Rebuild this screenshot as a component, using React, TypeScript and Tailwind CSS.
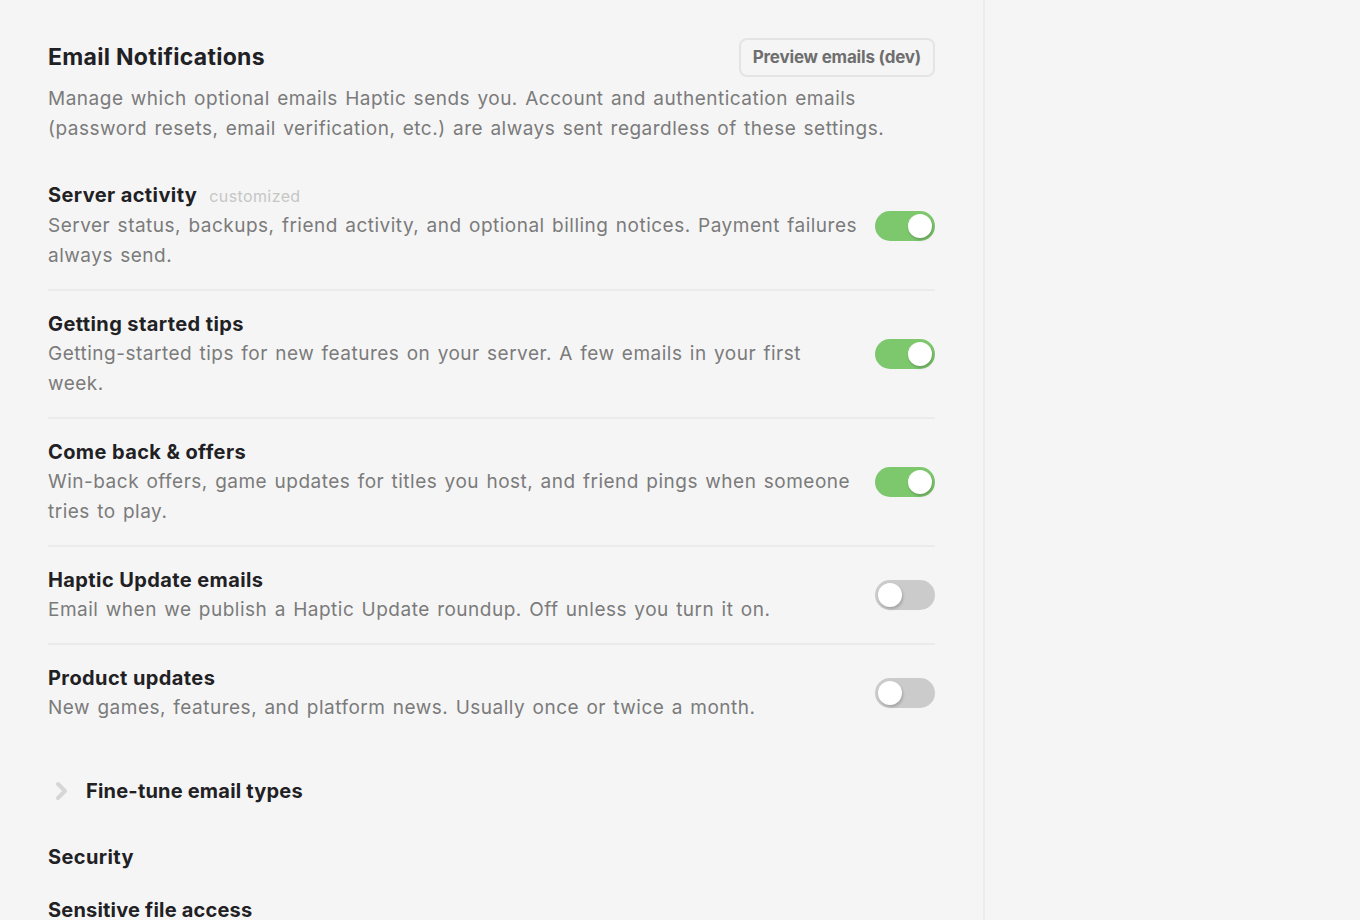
import React, { useState } from 'react';

type Pref = {
  id: string;
  title: string;
  desc: string;
  on: boolean;
  customized?: boolean;
};

const initialPrefs: Pref[] = [
  {
    id: 'server',
    title: 'Server activity',
    desc: 'Server status, backups, friend activity, and optional billing notices. Payment failures always send.',
    on: true,
    customized: true,
  },
  {
    id: 'tips',
    title: 'Getting started tips',
    desc: 'Getting-started tips for new features on your server. A few emails in your first week.',
    on: true,
  },
  {
    id: 'winback',
    title: 'Come back & offers',
    desc: 'Win-back offers, game updates for titles you host, and friend pings when someone tries to play.',
    on: true,
  },
  {
    id: 'haptic',
    title: 'Haptic Update emails',
    desc: 'Email when we publish a Haptic Update roundup. Off unless you turn it on.',
    on: false,
  },
  {
    id: 'product',
    title: 'Product updates',
    desc: 'New games, features, and platform news. Usually once or twice a month.',
    on: false,
  },
];

const Toggle = ({ on, onChange }: { on: boolean; onChange: () => void }) => (
  <button
    onClick={onChange}
    className={`relative w-[60px] h-[30px] rounded-full shrink-0 transition-colors ${on ? 'bg-[#7dc86d]' : 'bg-[#cbcbcb]'}`}
  >
    <span
      className={`absolute top-[3px] w-[24px] h-[24px] rounded-full bg-white shadow-[1px_2px_3px_rgba(0,0,0,0.2)] transition-all ${on ? 'left-[33px]' : 'left-[3px]'}`}
    />
  </button>
);

export default function App() {
  const [prefs, setPrefs] = useState(initialPrefs);

  const toggle = (id: string) => {
    setPrefs(prefs.map(p => (p.id === id ? { ...p, on: !p.on } : p)));
  };

  return (
    <div className="min-h-screen w-full bg-[#f5f5f5] flex font-['Inter',sans-serif]">
      <div className="w-[985px] h-[920px] overflow-hidden border-r-2 border-[#ebebeb] pl-[48px] pr-[48px] pt-[38px]">
        {/* header */}
        <div className="flex items-center justify-between">
          <h2 className="text-[23px] font-bold text-[#1f2124] tracking-[0.3px]">Email Notifications</h2>
          <button className="h-[39px] px-[12px] border-2 border-[#e4e4e4] rounded-lg text-[17px] font-bold text-[#6e6e6e] tracking-[-0.2px]">
            Preview emails (dev)
          </button>
        </div>
        <p className="mt-[7px] text-[19px] leading-[30px] text-[#7b7b7b] tracking-[0.5px] [word-spacing:1.5px]">
          Manage which optional emails Haptic sends you. Account and authentication emails (password resets, email verification, etc.) are always sent regardless of these settings.
        </p>

        {/* preference rows */}
        <div className="mt-[36px]">
          {prefs.map((p, i) => (
            <div
              key={p.id}
              className={`flex items-center gap-[16px] ${i === 0 ? 'pb-[18px]' : 'py-[18px]'} ${i < prefs.length - 1 ? 'border-b-2 border-[#ebebeb]' : ''}`}
            >
              <div className="flex-1">
                <div className="flex items-baseline gap-[12px] leading-[30px]">
                  <span className="text-[20px] font-bold text-[#1f2124] tracking-[0.4px]">{p.title}</span>
                  {p.customized && <span className="text-[16px] text-[#c6c6c6] tracking-[0.4px]">customized</span>}
                </div>
                <p className="text-[19px] leading-[30px] text-[#7b7b7b] tracking-[0.5px] [word-spacing:1.5px]">{p.desc}</p>
              </div>
              <Toggle on={p.on} onChange={() => toggle(p.id)} />
            </div>
          ))}
        </div>

        {/* fine-tune disclosure */}
        <button className="mt-[35px] flex items-center gap-[16px] pl-[6px]">
          <svg width="16" height="20" viewBox="0 0 16 20" fill="none">
            <path d="M4 3l7 7-7 7" stroke="#d6d6d6" strokeWidth="4" strokeLinecap="round" strokeLinejoin="round" />
          </svg>
          <span className="text-[20px] font-bold text-[#1f2124] tracking-[0.2px]">Fine-tune email types</span>
        </button>

        <h3 className="mt-[36px] text-[20px] font-bold text-[#1f2124] tracking-[0.4px]">Security</h3>
        <h3 className="mt-[23px] text-[20px] font-bold text-[#1f2124] tracking-[0.2px]">Sensitive file access</h3>
      </div>
      <div className="flex-1" />
    </div>
  );
}
